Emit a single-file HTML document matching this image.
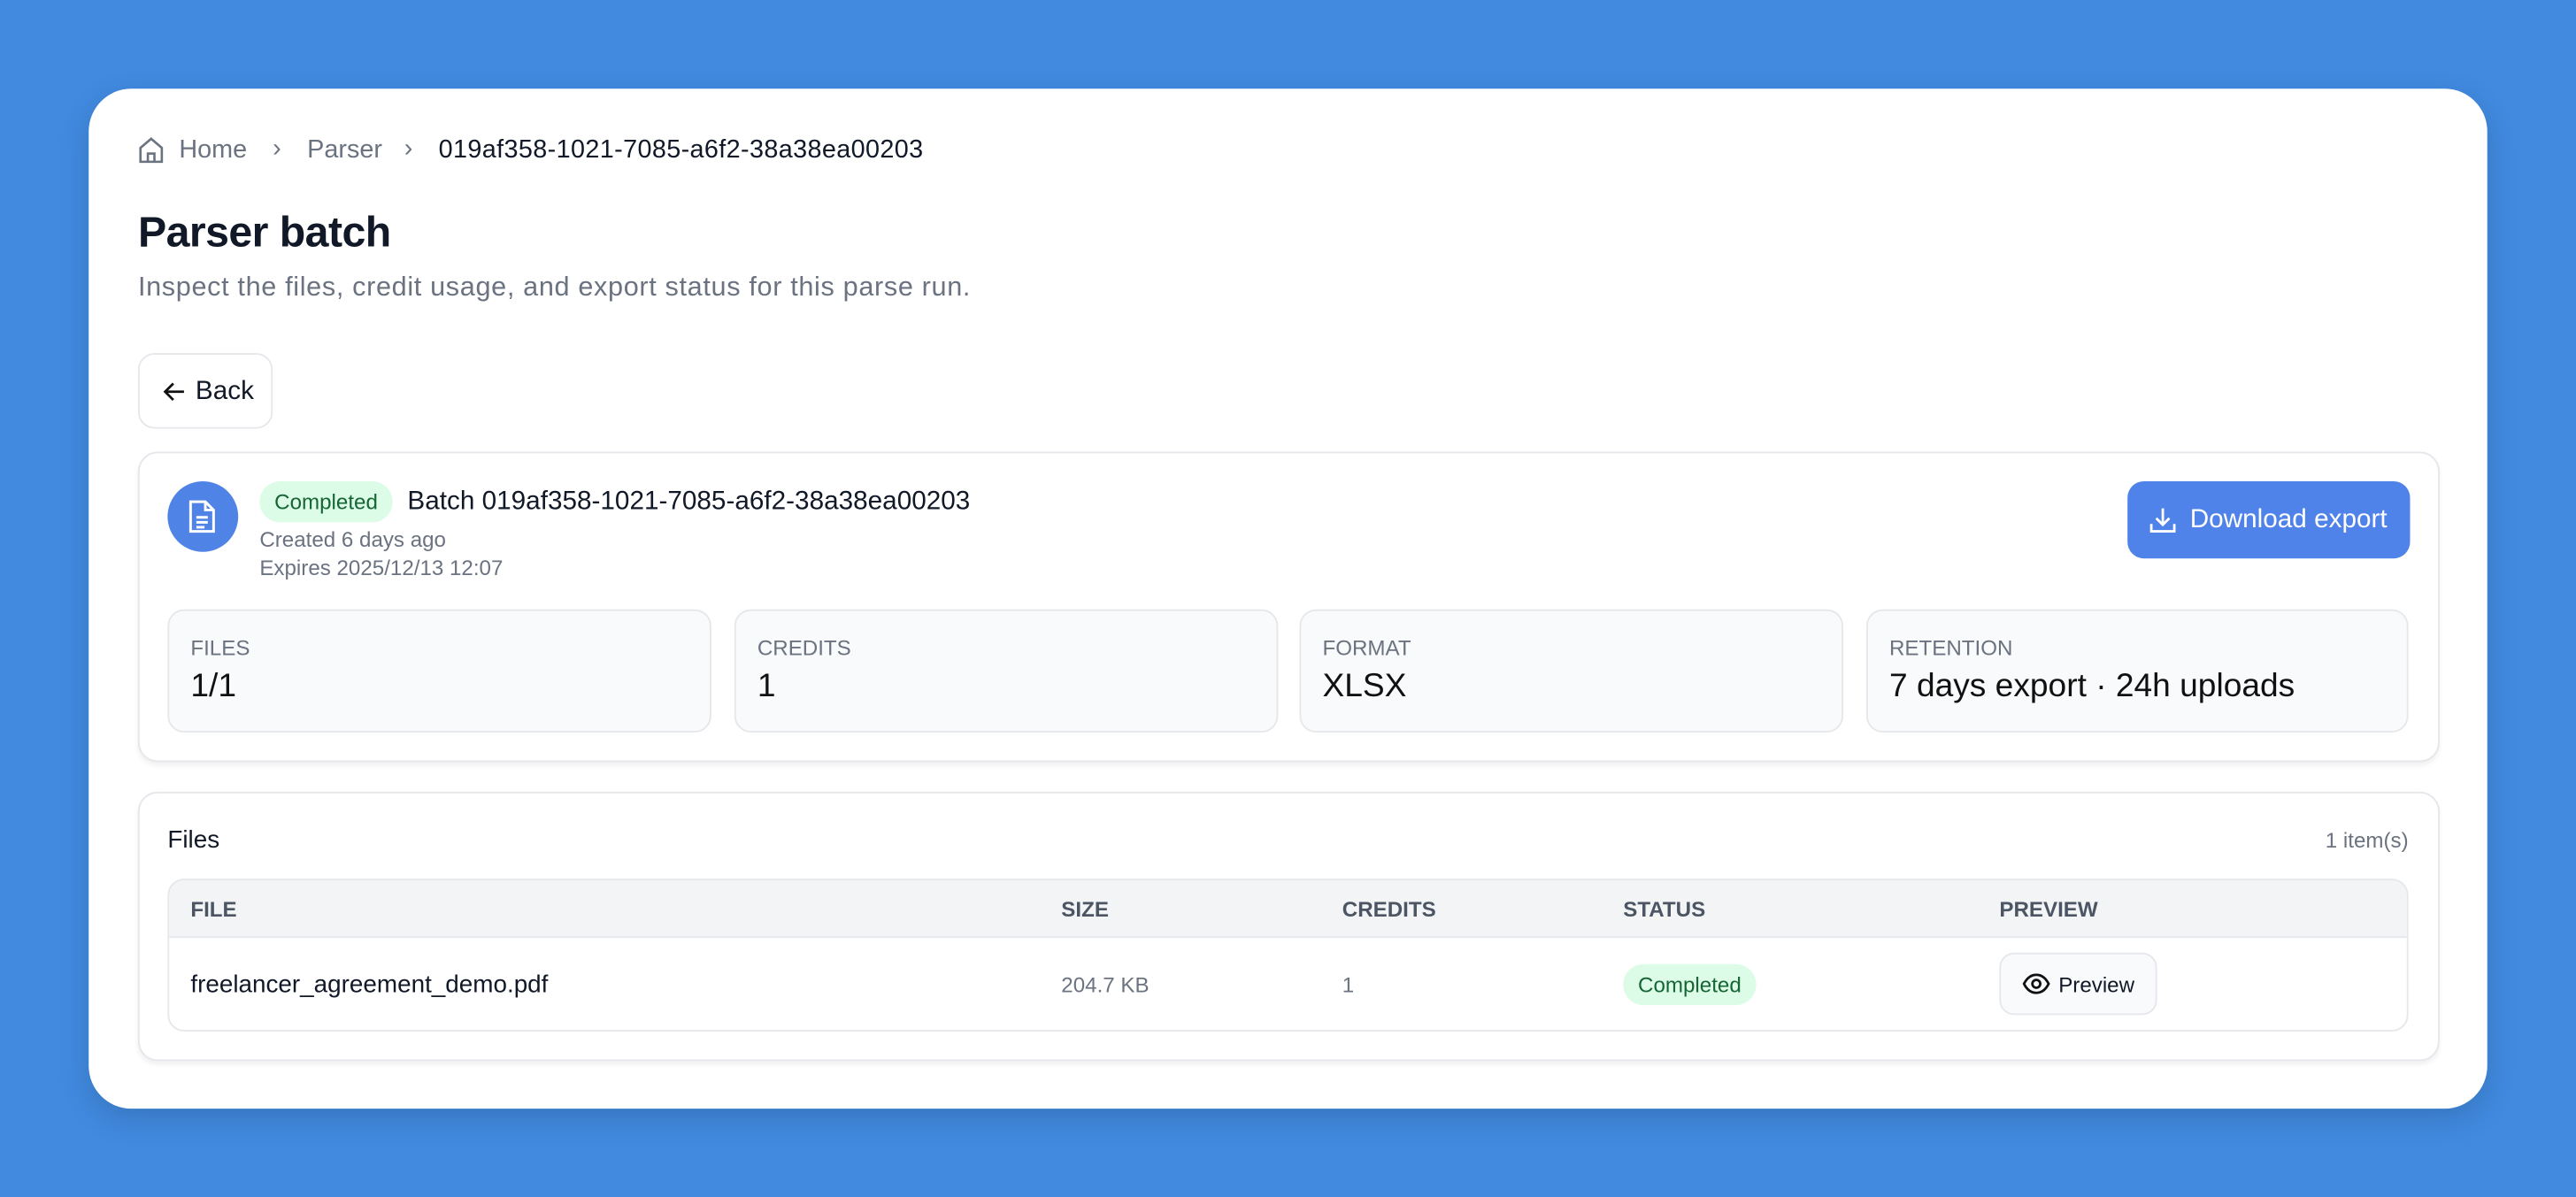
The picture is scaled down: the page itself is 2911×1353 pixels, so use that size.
<!DOCTYPE html>
<html><head><meta charset="utf-8"><style>
*{box-sizing:border-box;margin:0;padding:0}
html,body{width:2911px;height:1353px;overflow:hidden;background:#418ae0}
#s{position:absolute;left:0;top:0;width:1568px;height:729px;transform:scale(1.8565);transform-origin:0 0;font-family:"Liberation Sans",sans-serif;color:#111827}
.abs{position:absolute}
.card{position:absolute;left:54px;top:54px;width:1460px;height:621px;background:#fff;border-radius:26px;box-shadow:0 6px 18px rgba(0,0,0,.15)}
.gray{color:#6b7280}
.panel{position:absolute;left:84px;width:1401px;background:#fff;border:1px solid #e5e7eb;border-radius:12px;box-shadow:0 2px 3px rgba(0,0,0,.06)}
.stat{position:absolute;top:371px;height:75px;width:331px;background:#f9fafb;border:1px solid #e5e7eb;border-radius:10px}
.stat .l{position:absolute;left:13px;top:15px;font-size:13px;color:#6b7280}
.stat .v{position:absolute;left:13px;top:35px;font-size:20px;font-weight:500;color:#111}
.badge{position:absolute;background:#dcfce7;color:#166534;font-size:13px;border-radius:13px;text-align:center;line-height:25px}
.th{position:absolute;top:546px;font-size:13px;font-weight:bold;color:#4b5563}
</style></head><body><div id="s">
<div class="card"></div>
<svg class="abs" style="left:84px;top:83px" width="16" height="17" viewBox="0 0 16 17" fill="none" stroke="#6b7280" stroke-width="1.4"><path d="M1.5 7 8 1.5 14.5 7v8.5h-13z"/><path d="M6 15.5v-5h4v5"/></svg>
<div class="abs gray" style="left:109px;top:83px;font-size:15.5px">Home</div>
<div class="abs gray" style="left:166px;top:82px;font-size:15.5px">›</div>
<div class="abs gray" style="left:187px;top:83px;font-size:15.5px">Parser</div>
<div class="abs gray" style="left:246px;top:82px;font-size:15.5px">›</div>
<div class="abs" style="left:267px;top:83px;font-size:15.5px;letter-spacing:.2px">019af358-1021-7085-a6f2-38a38ea00203</div>
<div class="abs" style="left:84px;top:126px;font-size:26px;font-weight:bold;letter-spacing:-.3px">Parser batch</div>
<div class="abs gray" style="left:84px;top:166px;font-size:16.5px;letter-spacing:.35px">Inspect the files, credit usage, and export status for this parse run.</div>
<div class="abs" style="left:84px;top:215px;width:82px;height:46px;border:1px solid #e5e7eb;border-radius:10px;font-size:16px;line-height:45px;padding-left:34px">Back</div>
<svg class="abs" style="left:99px;top:232px" width="14" height="13" viewBox="0 0 14 13" fill="none" stroke="#111" stroke-width="1.5"><path d="M13 6.5H1.5M6.5 1.5l-5 5 5 5"/></svg>

<div class="panel" style="top:275px;height:189px"></div>
<div class="abs" style="left:102px;top:293px;width:43px;height:43px;border-radius:50%;background:#4f83e6"></div>
<svg class="abs" style="left:114px;top:304px" width="18" height="21" viewBox="0 0 18 21" fill="none" stroke="#fff" stroke-width="1.6"><path d="M2 1.5h9l5 5v13H2z"/><path d="M11 1.5v5h5M5.5 11h7M5.5 14h7M5.5 17h5"/></svg>
<div class="badge" style="left:158px;top:293px;width:81px">Completed</div>
<div class="abs" style="left:248px;top:297px;font-size:16px;font-weight:500">Batch 019af358-1021-7085-a6f2-38a38ea00203</div>
<div class="abs gray" style="left:158px;top:321px;font-size:13px">Created 6 days ago</div>
<div class="abs gray" style="left:158px;top:338px;font-size:13px">Expires 2025/12/13 12:07</div>
<div class="abs" style="left:1295px;top:293px;width:172px;height:47px;background:#5083ea;border-radius:10px;color:#fff;font-size:16px;font-weight:500;line-height:47px;padding-left:38px">Download export</div>
<svg class="abs" style="left:1308px;top:308px" width="17" height="17" viewBox="0 0 17 17" fill="none" stroke="#fff" stroke-width="1.5"><path d="M8.5 1.5v10M4.5 7.5l4 4 4-4M1.5 11v4.5h14V11"/></svg>
<div class="stat" style="left:102px"><div class="l">FILES</div><div class="v">1/1</div></div>
<div class="stat" style="left:447px"><div class="l">CREDITS</div><div class="v">1</div></div>
<div class="stat" style="left:791px"><div class="l">FORMAT</div><div class="v">XLSX</div></div>
<div class="stat" style="left:1136px;width:330px"><div class="l">RETENTION</div><div class="v">7 days export · 24h uploads</div></div>

<div class="panel" style="top:482px;height:164px"></div>
<div class="abs" style="left:102px;top:503px;font-size:15px;font-weight:500">Files</div>
<div class="abs gray" style="left:1366px;width:100px;text-align:right;top:504px;font-size:13px">1 item(s)</div>
<div class="abs" style="left:102px;top:535px;width:1364px;height:93px;border:1px solid #e5e7eb;border-radius:10px;overflow:hidden"><div style="height:35px;background:#f3f4f6;border-bottom:1px solid #e5e7eb"></div></div>
<div class="th" style="left:116px">FILE</div>
<div class="th" style="left:646px">SIZE</div>
<div class="th" style="left:817px">CREDITS</div>
<div class="th" style="left:988px">STATUS</div>
<div class="th" style="left:1217px">PREVIEW</div>
<div class="abs" style="left:116px;top:591px;font-size:15px;font-weight:500">freelancer_agreement_demo.pdf</div>
<div class="abs gray" style="left:646px;top:592px;font-size:13px">204.7 KB</div>
<div class="abs gray" style="left:817px;top:592px;font-size:13px">1</div>
<div class="badge" style="left:988px;top:587px;width:81px">Completed</div>
<div class="abs" style="left:1217px;top:580px;width:96px;height:38px;border:1px solid #e5e7eb;border-radius:9px;background:#f9fafb;font-size:13px;line-height:37px;padding-left:35px">Preview</div>
<svg class="abs" style="left:1231px;top:591px" width="17" height="16" viewBox="0 0 17 16" fill="none" stroke="#111" stroke-width="1.5"><path d="M1 8c2-4 4.5-5.5 7.5-5.5S14 4 16 8c-2 4-4.5 5.5-7.5 5.5S3 12 1 8z"/><circle cx="8.5" cy="8" r="2.4"/></svg>
</div></body></html>
